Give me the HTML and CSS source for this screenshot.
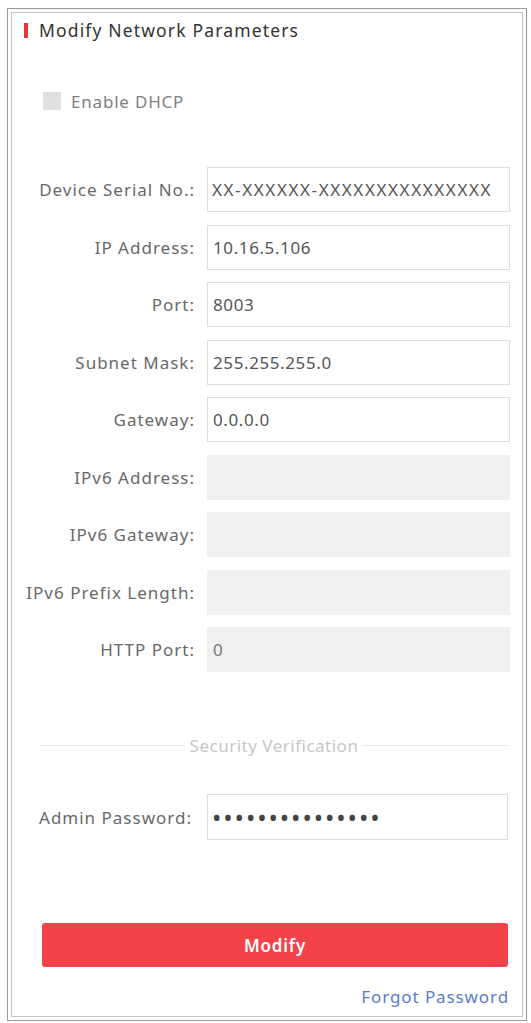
FILE: index.html
```html
<!DOCTYPE html>
<html lang="en">
<head>
<meta charset="utf-8">
<title>Modify Network Parameters</title>
<link rel="stylesheet" href="styles.css">
</head>
<body>
<div class="outer">
  <div class="inner">
    <div class="title"><span class="bar"></span>Modify Network Parameters</div>
    <div class="dhcp"><span class="cb"></span>Enable DHCP</div>
    <div class="form">
      <div class="lbl">Device Serial No.:</div><div class="field serial">XX-XXXXXX-XXXXXXXXXXXXXXX</div>
      <div class="lbl">IP Address:</div><div class="field">10.16.5.106</div>
      <div class="lbl">Port:</div><div class="field">8003</div>
      <div class="lbl">Subnet Mask:</div><div class="field">255.255.255.0</div>
      <div class="lbl">Gateway:</div><div class="field">0.0.0.0</div>
      <div class="lbl">IPv6 Address:</div><div class="field off"></div>
      <div class="lbl">IPv6 Gateway:</div><div class="field off"></div>
      <div class="lbl">IPv6 Prefix Length:</div><div class="field off"></div>
      <div class="lbl">HTTP Port:</div><div class="field off">0</div>
    </div>
    <div class="sep"><span class="line"></span><span class="sep-text">Security Verification</span><span class="line"></span></div>
    <div class="pwrow">
      <div class="lbl">Admin Password:</div><div class="field pw">&#8226;&#8226;&#8226;&#8226;&#8226;&#8226;&#8226;&#8226;&#8226;&#8226;&#8226;&#8226;&#8226;&#8226;&#8226;</div>
    </div>
    <button class="modify">Modify</button>
    <div class="forgot"><a href="#">Forgot Password</a></div>
  </div>
</div>
</body>
</html>
```

FILE: styles.css
```css
html, body {
  margin: 0;
  padding: 0;
  background: #ffffff;
}
body {
  padding: 8px 4px 0 7px;
  font-family: "Noto Sans", "Open Sans", sans-serif;
  color: #666;
}
.outer {
  border: 1px solid #9a9a9a;
  padding: 3px;
  height: 1005px;
}
.inner {
  border: 1px solid #c4c4c4;
  height: 1005px;
  box-sizing: border-box;
  padding: 10px 0 0 0;
}
.title {
  display: flex;
  align-items: center;
  height: 15px;
  padding-left: 12px;
  font-size: 17.5px;
  letter-spacing: 1.15px;
  color: #333;
  line-height: 15px;
}
.bar {
  width: 4px;
  height: 15px;
  background: #e8343f;
  margin-right: 11px;
}
.dhcp {
  display: flex;
  align-items: center;
  margin-top: 54px;
  margin-left: 31px;
  height: 18px;
  font-size: 17px;
  letter-spacing: 0.8px;
  color: #808080;
}
.cb {
  width: 18px;
  height: 18px;
  background: #e0e0e0;
  margin-right: 10px;
}
.form {
  margin-top: 57px;
  display: grid;
  grid-template-columns: 183px 303px;
  column-gap: 12px;
  row-gap: 12.5px;
}
.lbl {
  display: flex;
  align-items: center;
  justify-content: flex-end;
  font-size: 17px;
  letter-spacing: 1px;
  color: #686868;
  white-space: nowrap;
}
.field {
  height: 45px;
  box-sizing: border-box;
  border: 1px solid #dcdcdc;
  background: #fff;
  display: flex;
  align-items: center;
  padding-left: 5px;
  font-size: 17px;
  letter-spacing: 0.6px;
  color: #555;
  overflow: hidden;
  white-space: nowrap;
}
.field.serial {
  padding-left: 4px;
  letter-spacing: 1.6px;
}
.field.off {
  background: #f0f0f0;
  border-color: #f0f0f0;
  color: #777;
}
.sep {
  display: flex;
  align-items: center;
  margin-top: 63px;
  margin-left: 28px;
  width: 468px;
  height: 20px;
}
.line {
  flex: 1;
  height: 1px;
  background: #e6e6e6;
}
.sep-text {
  padding: 0 5px;
  font-size: 17px;
  letter-spacing: 0.5px;
  color: #c6c6c6;
}
.pwrow {
  margin-top: 39px;
  display: grid;
  grid-template-columns: 180px 301px;
  column-gap: 15px;
}
.pwrow .field {
  height: 46px;
}
.field.pw {
  font-size: 25px;
  letter-spacing: 1.9px;
  color: #444;
  padding-left: 4px;
}
.modify {
  display: block;
  margin: 83px 0 0 30px;
  width: 466px;
  height: 44px;
  border: none;
  border-radius: 3px;
  background: #f2434b;
  color: #fff;
  font-family: "Noto Sans", "Open Sans", sans-serif;
  font-size: 17px;
  letter-spacing: 0.8px;
  font-weight: 600;
}
.forgot {
  margin-top: 20px;
  padding-right: 13px;
  display: flex;
  justify-content: flex-end;
  line-height: 20px;
  font-size: 17px;
  letter-spacing: 0.9px;
}
.forgot a {
  color: #5a7cca;
  text-decoration: none;
}
```
